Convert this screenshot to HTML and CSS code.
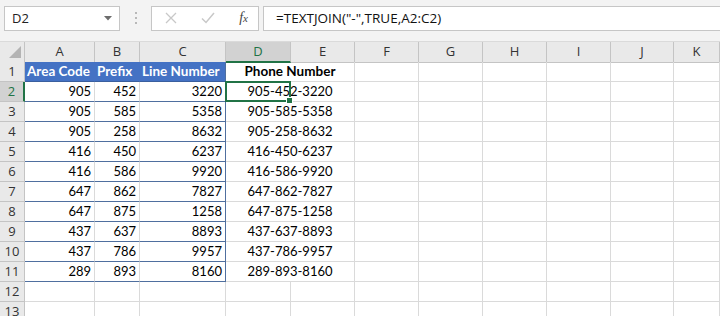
FILE: index.html
```html
<!DOCTYPE html>
<html lang="en">
<head>
  <meta charset="UTF-8">
  <title>TEXTJOIN - Phone Numbers</title>
  <link rel="stylesheet" href="styles.css">
</head>
<body>
  <div class="toolbar">
    <div class="namebox">
      <span>D2</span>
      <svg class="drop" width="8" height="5" viewBox="0 0 8 5"><path d="M0 0h8L4 4.5z" fill="#6d6d6d"/></svg>
    </div>
    <div class="grip"><i></i><i></i><i></i></div>
    <div class="buttons">
      <svg width="12" height="12" viewBox="0 0 12 12"><path d="M1 1l10 10M11 1L1 11" stroke="#c8c8c8" stroke-width="1.3"/></svg>
      <svg width="14" height="12" viewBox="0 0 14 12"><path d="M1 6.5l4 4L13 1" stroke="#c8c8c8" stroke-width="1.5" fill="none"/></svg>
      <span class="fx">f<small>x</small></span>
    </div>
    <div class="formula">=TEXTJOIN("-",TRUE,A2:C2)</div>
  </div>

  <div class="sheet">
    <div class="row head">
      <div class="corner"><svg width="12" height="12" viewBox="0 0 12 12"><path d="M12 0v12H0z" fill="#b4b4b4"/></svg></div>
      <div>A</div><div>B</div><div>C</div><div class="sel">D</div><div>E</div><div>F</div><div>G</div><div>H</div><div>I</div><div>J</div><div>K</div>
    </div>
    <div class="row">
      <div class="rh">1</div>
      <div class="title">Area Code</div><div class="title">Prefix</div><div class="title last">Line Number</div>
      <div class="phone bold">Phone Number</div>
      <div></div><div></div><div></div><div></div><div></div><div></div>
    </div>
    <div class="row">
      <div class="rh sel">2</div>
      <div class="t">905</div><div class="t">452</div><div class="t last">3220</div>
      <div class="phone">905-452-3220<span class="active"><b></b></span></div>
      <div></div><div></div><div></div><div></div><div></div><div></div>
    </div>
    <div class="row">
      <div class="rh">3</div>
      <div class="t">905</div><div class="t">585</div><div class="t last">5358</div>
      <div class="phone">905-585-5358</div>
      <div></div><div></div><div></div><div></div><div></div><div></div>
    </div>
    <div class="row">
      <div class="rh">4</div>
      <div class="t">905</div><div class="t">258</div><div class="t last">8632</div>
      <div class="phone">905-258-8632</div>
      <div></div><div></div><div></div><div></div><div></div><div></div>
    </div>
    <div class="row">
      <div class="rh">5</div>
      <div class="t">416</div><div class="t">450</div><div class="t last">6237</div>
      <div class="phone">416-450-6237</div>
      <div></div><div></div><div></div><div></div><div></div><div></div>
    </div>
    <div class="row">
      <div class="rh">6</div>
      <div class="t">416</div><div class="t">586</div><div class="t last">9920</div>
      <div class="phone">416-586-9920</div>
      <div></div><div></div><div></div><div></div><div></div><div></div>
    </div>
    <div class="row">
      <div class="rh">7</div>
      <div class="t">647</div><div class="t">862</div><div class="t last">7827</div>
      <div class="phone">647-862-7827</div>
      <div></div><div></div><div></div><div></div><div></div><div></div>
    </div>
    <div class="row">
      <div class="rh">8</div>
      <div class="t">647</div><div class="t">875</div><div class="t last">1258</div>
      <div class="phone">647-875-1258</div>
      <div></div><div></div><div></div><div></div><div></div><div></div>
    </div>
    <div class="row">
      <div class="rh">9</div>
      <div class="t">437</div><div class="t">637</div><div class="t last">8893</div>
      <div class="phone">437-637-8893</div>
      <div></div><div></div><div></div><div></div><div></div><div></div>
    </div>
    <div class="row">
      <div class="rh">10</div>
      <div class="t">437</div><div class="t">786</div><div class="t last">9957</div>
      <div class="phone">437-786-9957</div>
      <div></div><div></div><div></div><div></div><div></div><div></div>
    </div>
    <div class="row">
      <div class="rh">11</div>
      <div class="t">289</div><div class="t">893</div><div class="t last">8160</div>
      <div class="phone">289-893-8160</div>
      <div></div><div></div><div></div><div></div><div></div><div></div>
    </div>
    <div class="row">
      <div class="rh">12</div>
      <div></div><div></div><div></div><div></div><div></div><div></div><div></div><div></div><div></div><div></div><div></div>
    </div>
    <div class="row">
      <div class="rh">13</div>
      <div></div><div></div><div></div><div></div><div></div><div></div><div></div><div></div><div></div><div></div><div></div>
    </div>
  </div>
</body>
</html>
```

FILE: styles.css
```css
html, body {
  margin: 0;
  padding: 0;
  background: #fff;
  overflow: hidden;
}
body {
  font-family: Lato, "Liberation Sans", sans-serif;
  font-size: 13px;
  color: #000;
}
.toolbar {
  display: flex;
  align-items: center;
  height: 42px;
  padding: 6px 0 11px 4px;
  box-sizing: border-box;
  background: #f3f3f3;
  border-bottom: 1px solid #dadada;
  font-family: "Open Sans", "Noto Sans", sans-serif;
}
.namebox {
  display: flex;
  align-items: center;
  justify-content: space-between;
  width: 116px;
  height: 25px;
  box-sizing: border-box;
  padding: 0 7px 0 7px;
  background: #fff;
  border: 1px solid #c6c6c6;
  font-size: 13px;
  color: #222;
}
.grip {
  display: flex;
  flex-direction: column;
  gap: 3px;
  margin: 0 14px 0 15px;
}
.grip i {
  display: block;
  width: 2px;
  height: 2px;
  background: #b8b8b8;
}
.buttons {
  display: flex;
  align-items: center;
  width: 108px;
  height: 25px;
  box-sizing: border-box;
  padding: 0 10px 0 13px;
  justify-content: space-between;
  background: #fff;
  border: 1px solid #c6c6c6;
}
.fx {
  font-family: "Liberation Serif", serif;
  font-style: italic;
  font-size: 14px;
  color: #444;
}
.fx small {
  font-size: 11px;
}
.formula {
  flex: 1;
  height: 25px;
  box-sizing: border-box;
  margin-left: 4px;
  padding: 2px 12px;
  background: #fff;
  border: 1px solid #c6c6c6;
  border-right: 0;
  font-size: 13.5px;
  color: #111;
}
.sheet {
  position: relative;
}
.row {
  display: grid;
  grid-template-columns: 25px 70px 45px 86px 65px 64px 64px 64px 64px 64px 63px 46px;
  height: 20px;
}
.row > div {
  box-sizing: border-box;
  border-right: 1px solid #dadada;
  border-bottom: 1px solid #dadada;
  line-height: 19px;
  white-space: nowrap;
  position: relative;
}
.row.head > div {
  background: #e9e9e9;
  border-color: #c4c4c4;
  text-align: center;
  color: #333;
  font-family: "Open Sans", sans-serif;
  font-size: 13px;
}
.row.head > div.corner {
  display: flex;
  align-items: flex-end;
  justify-content: flex-end;
  padding: 0 3px 4px 0;
}
.row.head > div.sel {
  background: #d2d2d2;
  color: #217346;
  border-bottom: 2px solid #217346;
}
.row > .rh {
  background: #e9e9e9;
  border-color: #c4c4c4;
  text-align: center;
  color: #333;
  font-family: "Open Sans", sans-serif;
  font-size: 13px;
}
.row > .rh.sel {
  background: #d2d2d2;
  color: #217346;
  border-right: 2px solid #217346;
}
.row > .title {
  background: #4472c4;
  color: #fff;
  font-weight: bold;
  font-size: 13.5px;
  padding-left: 2px;
  border-right-color: #4472c4;
  border-bottom-color: #3a5f9e;
  overflow: visible;
}
.row > .t {
  text-align: right;
  padding-right: 3px;
  border-bottom-color: #4f6f9f;
}
.row > .last {
  border-right-color: #4f6f9f;
}
.row > .phone {
  grid-column: span 2;
  text-align: center;
}
.bold {
  font-weight: bold;
  font-size: 13.5px;
}
.active {
  position: absolute;
  left: -1px;
  top: -1px;
  width: 66px;
  height: 21px;
  box-sizing: border-box;
  border: 2px solid #217346;
}
.active b {
  position: absolute;
  right: -4px;
  bottom: -4px;
  width: 5px;
  height: 5px;
  background: #217346;
  border: 1px solid #fff;
}
```
